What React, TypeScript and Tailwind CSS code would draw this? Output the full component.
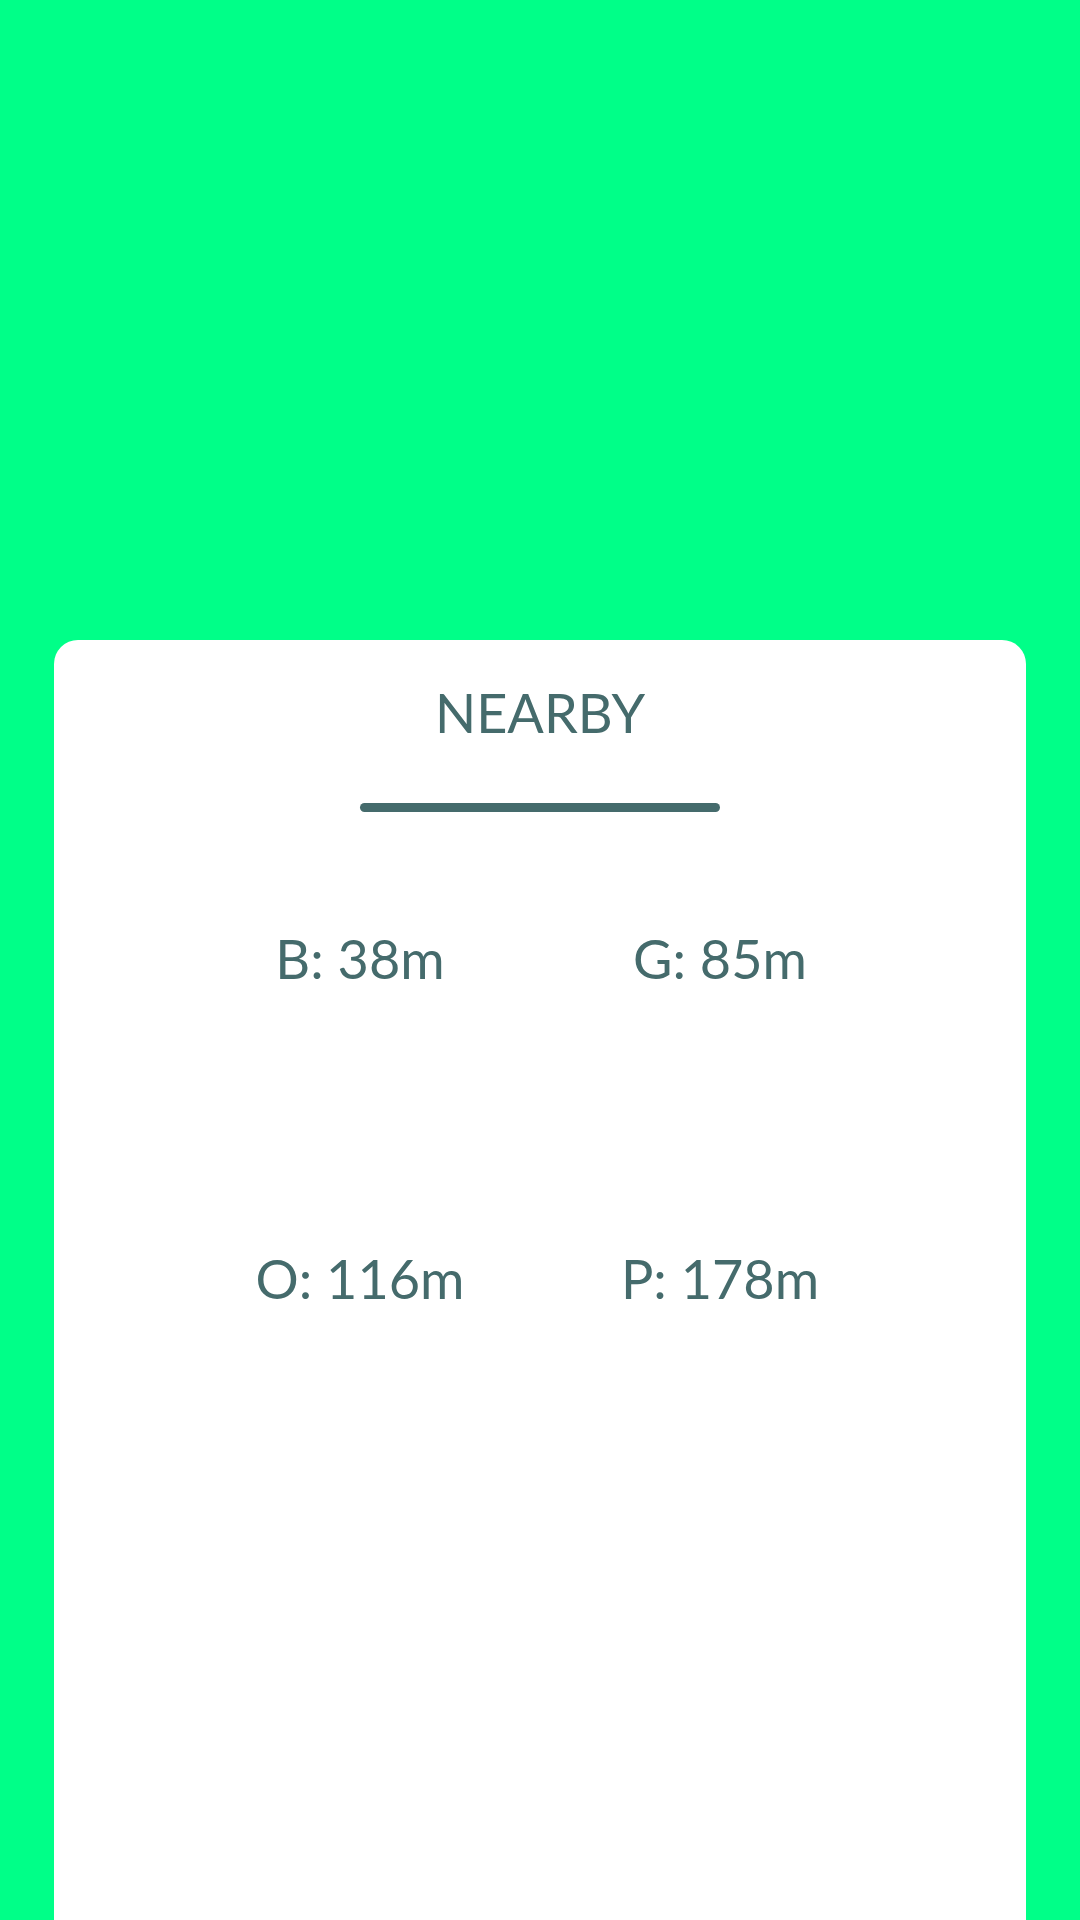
import React from 'react';

const items = [
  { label: 'B', dist: '38m' },
  { label: 'G', dist: '85m' },
  { label: 'O', dist: '116m' },
  { label: 'P', dist: '178m' },
];

const App: React.FC = () => {
  return (
    <div className="h-[1920px] overflow-hidden bg-[#00ff88] pt-[640px] px-[54px] font-['Lato',sans-serif]">
      <div className="h-[1280px] bg-white rounded-t-[24px] pt-[46px] text-[#456b6c]">
        <h1 className="text-center text-[54px] leading-none font-normal">NEARBY</h1>
        <div className="mx-auto mt-[63px] w-[360px] h-[9px] rounded-full bg-[#456b6c]" />

        {/* Distances */}
        <div className="mx-auto mt-[120px] w-[720px] grid grid-cols-2 gap-y-[266px]">
          {items.map((item) => (
            <div
              key={item.label}
              className="text-center text-[54px] leading-none whitespace-nowrap"
            >
              {item.label}: {item.dist}
            </div>
          ))}
        </div>
      </div>
    </div>
  );
};

export default App;
